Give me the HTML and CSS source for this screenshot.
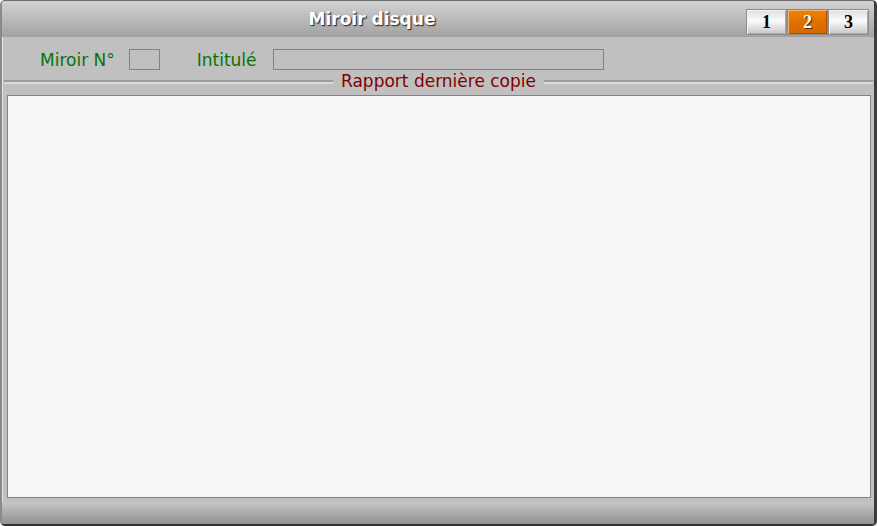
FILE: index.html
```html
<!DOCTYPE html>
<html lang="fr">
<head>
<meta charset="utf-8">
<title>Miroir disque</title>
<link rel="stylesheet" href="styles.css">
</head>
<body>
<div class="window">
  <header class="titlebar">
    <div class="title">Miroir disque</div>
    <nav class="pages">
      <span class="page">1</span>
      <span class="page active">2</span>
      <span class="page">3</span>
    </nav>
  </header>
  <div class="fields">
    <label class="label lbl-num">Miroir N°</label>
    <span class="input input-num"></span>
    <label class="label lbl-int">Intitulé</label>
    <span class="input input-int"></span>
  </div>
  <div class="separator">
    <span class="rule"></span>
    <span class="legend">Rapport dernière copie</span>
    <span class="rule"></span>
  </div>
  <div class="content"></div>
  <footer class="statusbar"></footer>
</div>
</body>
</html>
```

FILE: styles.css
```css
html, body {
  margin: 0;
  padding: 0;
  background: #eef6f6;
}
body {
  font-family: "DejaVu Sans", Verdana, sans-serif;
  font-size: 17px;
}
.window {
  width: 877px;
  height: 526px;
  box-sizing: border-box;
  border-top: 1px solid #6c6c6c;
  border-left: 2px solid #8a8a8a;
  border-right: 3px solid #3c3c3c;
  border-bottom: 2px solid #333333;
  border-radius: 5px;
  background: #c0c0c0;
  box-shadow: inset 1px 0 0 #e6e6e6;
  display: flex;
  flex-direction: column;
  overflow: hidden;
}
.titlebar {
  height: 36px;
  flex: none;
  display: flex;
  align-items: flex-start;
  background: linear-gradient(#d2d2d2, #a2a2a2);
}
.title {
  flex: 1;
  text-align: center;
  font-weight: bold;
  color: #ffffff;
  text-shadow: 1px 1px 0 #3a3a3a, 1px 1px 2px #555555;
  line-height: 20px;
  margin-top: 8px;
  padding-right: 4px;
}
.pages {
  display: flex;
  margin-top: 8px;
  margin-right: 5px;
}
.page {
  width: 39px;
  height: 24px;
  border: 1px solid #8c8c8c;
  box-shadow: inset 1px 1px 0 #f4f4f4, inset -1px -1px 0 #a8a8a8;
  background: linear-gradient(#dedede, #fbfbfb 45%, #c6c6c6);
  font-family: "Liberation Serif", "Times New Roman", serif;
  font-weight: bold;
  font-size: 18px;
  line-height: 25px;
  text-align: center;
  color: #000000;
}
.page.active {
  background: linear-gradient(#f08400, #e07000 50%, #d86800);
  box-shadow: inset 1px 1px 0 #f4b070, inset -1px -1px 0 #b05000;
  color: #ffffff;
  text-shadow: 1px 1px 0 #5a3000;
}
.fields {
  height: 42px;
  flex: none;
  display: flex;
  align-items: center;
  padding-left: 38px;
}
.label {
  color: #067406;
  line-height: 20px;
  margin-top: 3px;
}
.lbl-num { margin-right: 14px; }
.lbl-int { margin-left: 37px; margin-right: 16px; }
.input {
  height: 19px;
  border: 1px solid #828282;
  background: #c0c0c0;
  margin-top: 2px;
}
.input-num { width: 29px; }
.input-int { width: 329px; }
.separator {
  height: 16px;
  flex: none;
  display: flex;
  align-items: center;
  margin: 0 1px 0 2px;
}
.rule {
  flex: 1;
  height: 2px;
  border-top: 2px solid #9c9c9c;
  background: #dadada;
  margin-top: -10px;
}
.legend {
  color: #800000;
  padding: 0 8px;
  line-height: 16px;
  margin-top: -12px;
}
.content {
  height: 401px;
  flex: none;
  margin: 0 3px 0 5px;
  border: 1px solid #828282;
  background: #f6f6f6;
}
.statusbar {
  margin-top: 4px;
  flex: 1;
  background: linear-gradient(#c6c6c6, #929292);
}
```
